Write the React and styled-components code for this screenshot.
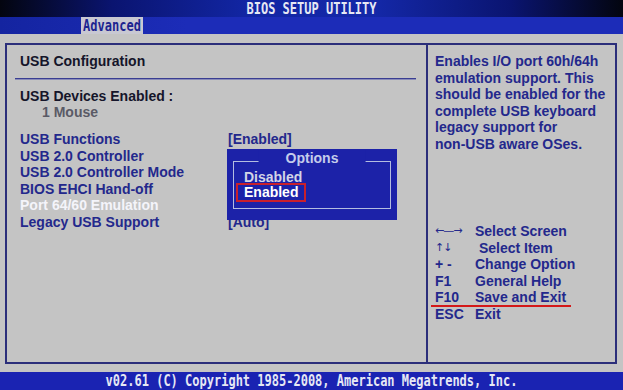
import React from 'react';
import styled, { createGlobalStyle } from 'styled-components';

const GRAY = '#c4c4c4';
const NAVY = '#2b2e7a';
const TEXT_BLUE = '#23288c';
const POPUP_BLUE = '#1c22a8';
const MONO = '"DejaVu Sans Mono", "Liberation Mono", monospace';
const SANS = '"Liberation Sans", Arial, sans-serif';

const GlobalStyle = createGlobalStyle`
  html, body {
    margin: 0;
    padding: 0;
    background: ${GRAY};
  }
  body {
    font-family: ${SANS};
  }
`;

const Screen = styled.div`
  width: 623px;
  height: 390px;
  display: flex;
  flex-direction: column;
  overflow: hidden;
  background: ${GRAY};
`;

const TitleBar = styled.div`
  height: 17px;
  display: flex;
  align-items: center;
  justify-content: center;
  background: linear-gradient(
    90deg,
    #03050f 0%,
    #0a1470 18%,
    #1226a4 40%,
    #1428a8 60%,
    #0a1470 82%,
    #03050f 100%
  );
`;

const MonoText = styled.span`
  font-family: ${MONO};
  font-weight: bold;
  font-size: 12px;
  line-height: 1;
  display: inline-block;
  transform: scaleY(1.25);
  color: ${(p) => p.$color || '#e6e8f4'};
  white-space: pre;
`;

const TabBar = styled.div`
  height: 17px;
  padding-left: 81px;
  display: flex;
  background: linear-gradient(90deg, #1424a0 0%, #1c2cb8 30%, #1c2cb8 100%);
`;

const Tab = styled.div`
  width: 62px;
  display: flex;
  align-items: center;
  justify-content: center;
  background: #c8c8d2;
`;

const Body = styled.div`
  flex: 1;
  padding: 9px 6px 8px 5px;
  display: flex;
`;

const Frame = styled.div`
  flex: 1;
  border: 2px solid ${NAVY};
  display: grid;
  grid-template-columns: 421px 1fr;
`;

const LeftPanel = styled.div`
  position: relative;
  border-right: 2px solid ${NAVY};
  padding: 8px 0 0 13px;
  font-weight: bold;
  font-size: 14px;
  line-height: 16.5px;
`;

const Heading = styled.div`
  color: #15152a;
`;

const Rule = styled.div`
  height: 0;
  border-top: 1px solid #3a3e92;
  box-shadow: 0 1px 0 #8a8cb8;
  margin: 8px 10px 9px -5px;
`;

const Note = styled.div`
  color: #5a5a66;
  padding-left: 22px;
  line-height: 16px;
`;

const ItemList = styled.div`
  margin-top: 11px;
  display: grid;
  grid-template-columns: 208px 1fr;
`;

const ItemLabel = styled.div`
  color: ${(p) => (p.$active ? '#f4f4fa' : TEXT_BLUE)};
`;

const ItemValue = styled.div`
  color: ${TEXT_BLUE};
`;

const Popup = styled.div`
  position: absolute;
  left: 220px;
  top: 104px;
  width: 170px;
  height: 71px;
  box-sizing: border-box;
  background: ${POPUP_BLUE};
  padding: 12px 6px 11px 6px;
  display: flex;
`;

const PopupInner = styled.div`
  position: relative;
  flex: 1;
  border: 1px solid #b4bce0;
  padding: 8px 0 0 2px;
`;

const PopupTitle = styled.div`
  position: absolute;
  top: -12px;
  left: 50%;
  transform: translateX(-50%);
  padding: 0 27px;
  background: ${POPUP_BLUE};
  color: #c4cceb;
  white-space: nowrap;
`;

const Option = styled.div`
  color: #d2d4e6;
  padding-left: 8px;
  line-height: 14px;
`;

const SelectedOption = styled.div`
  display: inline-block;
  margin-top: -1px;
  border: 2px solid #c8202c;
  padding: 0 6px;
  line-height: 15px;
  color: #ffffff;
`;

const RightPanel = styled.div`
  padding: 8px 0 0 7px;
  font-weight: bold;
  font-size: 14px;
  line-height: 16.5px;
  color: ${TEXT_BLUE};
`;

const Help = styled.div`
  white-space: pre;
`;

const Keys = styled.div`
  margin-top: 71px;
`;

const KeyRow = styled.div`
  position: relative;
  display: grid;
  grid-template-columns: 40px 1fr;

  &::after {
    content: '';
    display: ${(p) => (p.$marked ? 'block' : 'none')};
    position: absolute;
    left: -4px;
    bottom: -1px;
    width: 140px;
    height: 2px;
    background: #d41818;
  }
`;

const KeyName = styled.span`
  font-family: ${(p) => (p.$glyph ? '"DejaVu Sans", sans-serif' : SANS)};
  font-weight: ${(p) => (p.$glyph ? 'normal' : 'bold')};
  font-size: ${(p) => (p.$glyph ? '11px' : '14px')};
  letter-spacing: ${(p) => (p.$glyph ? '-1px' : '0')};
`;

const Footer = styled.div`
  height: 18px;
  display: flex;
  align-items: center;
  justify-content: center;
  background: #1a23b2;
`;

const items = [
  ['USB Functions', '[Enabled]'],
  ['USB 2.0 Controller', ''],
  ['USB 2.0 Controller Mode', ''],
  ['BIOS EHCI Hand-off', ''],
  ['Port 64/60 Emulation', '', true],
  ['Legacy USB Support', '[Auto]'],
];

const helpText = [
  'Enables I/O port 60h/64h',
  'emulation support. This',
  'should be enabled for the',
  'complete USB keyboard',
  'legacy support for',
  'non-USB aware OSes.',
];

const keys = [
  ['\u2190\u2014\u2192', 'Select Screen', true],
  ['\u2191\u2193', ' Select Item', true],
  ['+ -', 'Change Option'],
  ['F1', 'General Help'],
  ['F10', 'Save and Exit', false, true],
  ['ESC', 'Exit'],
];

export default function App() {
  return (
    <>
      <GlobalStyle />
      <Screen>
        <TitleBar>
          <MonoText>BIOS SETUP UTILITY</MonoText>
        </TitleBar>
        <TabBar>
          <Tab>
            <MonoText $color="#1c2490">Advanced</MonoText>
          </Tab>
        </TabBar>
        <Body>
          <Frame>
            <LeftPanel>
              <Heading>USB Configuration</Heading>
              <Rule />
              <Heading>USB Devices Enabled :</Heading>
              <Note>1 Mouse</Note>
              <ItemList>
                {items.map(([label, value, active]) => (
                  <React.Fragment key={label}>
                    <ItemLabel $active={active}>{label}</ItemLabel>
                    <ItemValue>{value}</ItemValue>
                  </React.Fragment>
                ))}
              </ItemList>
              <Popup>
                <PopupInner>
                  <PopupTitle>Options</PopupTitle>
                  <Option>Disabled</Option>
                  <SelectedOption>Enabled</SelectedOption>
                </PopupInner>
              </Popup>
            </LeftPanel>
            <RightPanel>
              {helpText.map((line) => (
                <Help key={line}>{line}</Help>
              ))}
              <Keys>
                {keys.map(([key, label, glyph, marked]) => (
                  <KeyRow key={key} $marked={marked}>
                    <KeyName $glyph={glyph}>{key}</KeyName>
                    <span style={{ whiteSpace: 'pre' }}>{label}</span>
                  </KeyRow>
                ))}
              </Keys>
            </RightPanel>
          </Frame>
        </Body>
        <Footer>
          <MonoText>v02.61 (C) Copyright 1985-2008, American Megatrends, Inc.</MonoText>
        </Footer>
      </Screen>
    </>
  );
}
